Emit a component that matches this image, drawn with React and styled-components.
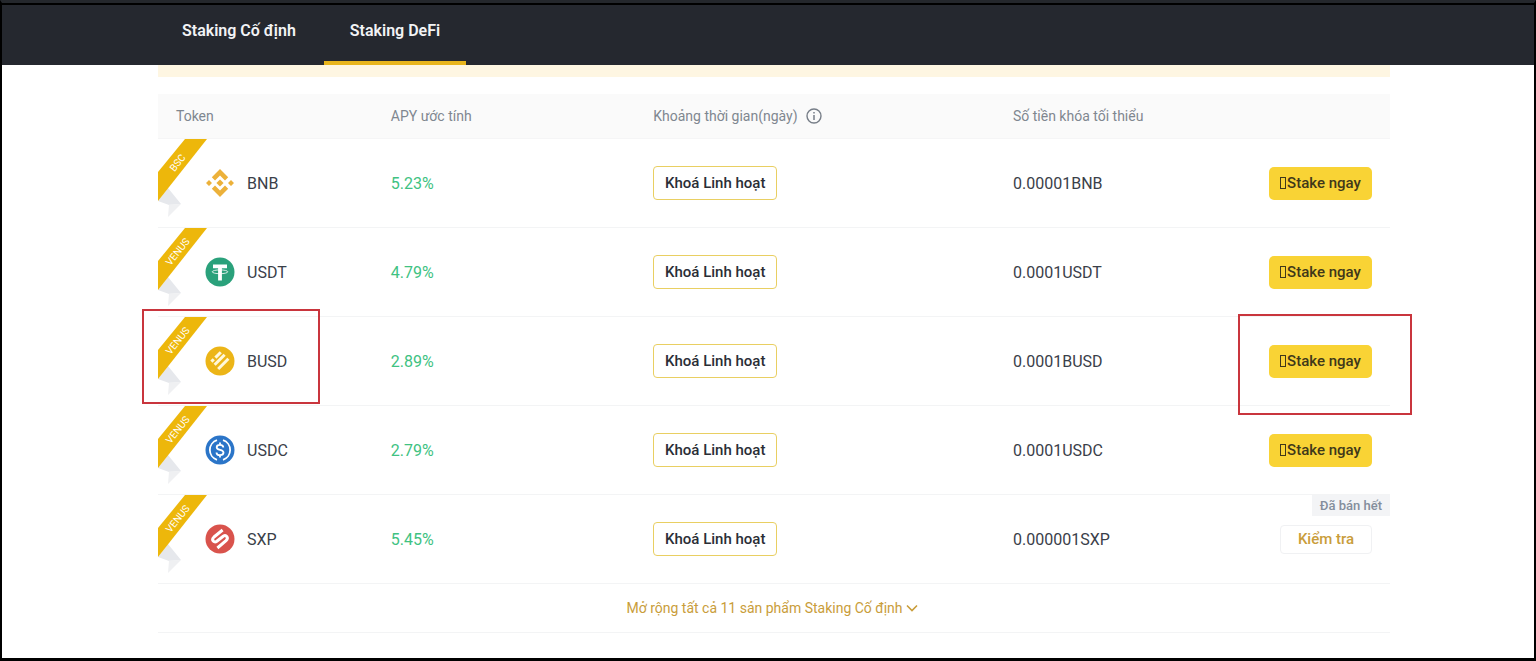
import React from "react";
import styled, { createGlobalStyle } from "styled-components";

const GlobalStyle = createGlobalStyle`
  *, *::before, *::after { box-sizing: border-box; }
  body {
    margin: 0;
    background: #fff;
    font-family: Roboto, "Liberation Sans", sans-serif;
    color: #3a4049;
  }
`;

const Page = styled.div`
  min-height: 100vh;
  display: flex;
  flex-direction: column;
  border: 2px solid #000;
  border-top: 3px solid #24272c;
  border-bottom-width: 3px;
`;

const Header = styled.header`
  background: #25282f;
  border-top: 2px solid #000;
  height: 62px;
  padding-left: 154px;
`;

const Tabs = styled.nav`
  display: flex;
  gap: 2px;
  height: 100%;
`;

const Tab = styled.a`
  display: flex;
  align-items: flex-start;
  padding: 14px 26px 0;
  border-bottom: 4px solid ${(p) => (p.$active ? "#e8b51c" : "transparent")};
  color: #f2f3f5;
  font-size: 16px;
  line-height: 24px;
  font-weight: 600;
  text-decoration: none;
  white-space: nowrap;
`;

const Content = styled.main`
  flex: 1;
  padding: 0 144px 0 156px;
`;

const NoticeEdge = styled.div`
  height: 12px;
  margin-bottom: 17px;
  background: #fef6e2;
`;

const Table = styled.table`
  width: 100%;
  table-layout: fixed;
  border-collapse: separate;
  border-spacing: 0;
`;

const HeadCell = styled.th`
  height: 45px;
  width: ${(p) => p.$width || "auto"};
  padding: 0 0 0 ${(p) => (p.$first ? "18px" : "0")};
  background: #fafafa;
  border-bottom: 1px solid #f5f5f6;
  color: #7f8790;
  font-size: 14px;
  font-weight: 400;
  text-align: left;
  white-space: nowrap;
`;

const HeadLabel = styled.span`
  display: flex;
  align-items: center;
  gap: 8px;
`;

const Cell = styled.td`
  position: relative;
  height: 89px;
  padding: 0;
  border-bottom: 1px solid #f3f4f5;
  font-size: 16px;
  white-space: nowrap;
`;

const Apy = styled.span`
  color: #40c282;
`;

const Token = styled.div`
  display: flex;
  align-items: center;
  gap: 12px;
  padding-left: 47px;
`;

const Ribbon = styled.svg`
  position: absolute;
  top: 0;
  left: 0;
`;

const Actions = styled.div`
  display: flex;
  justify-content: flex-end;
  padding-right: 18px;
`;

const Button = styled.button`
  display: inline-flex;
  align-items: center;
  justify-content: center;
  margin: 0;
  padding: 0;
  font-family: inherit;
  font-size: 15px;
  font-weight: 500;
  border-radius: 4px;
  cursor: pointer;
`;

const TermButton = styled(Button)`
  width: 124px;
  height: 34px;
  background: #fff;
  border: 1px solid #e9cf62;
  color: #2a2e36;
`;

const StakeButton = styled(Button)`
  width: 103px;
  height: 33px;
  gap: 1px;
  background: #f9d335;
  border: 0;
  border-radius: 5px;
  color: #40381a;
`;

const EmptyGlyph = styled.span`
  width: 6px;
  height: 12px;
  border: 1px solid currentColor;
`;

const CheckButton = styled(Button)`
  width: 92px;
  height: 29px;
  background: #fff;
  border: 1px solid #f0f1f3;
  color: #c99d3a;
`;

const SoldOut = styled.span`
  position: absolute;
  top: 0;
  right: 0;
  padding: 0 8px;
  background: #f3f4f6;
  color: #848e9c;
  font-size: 13px;
  font-weight: 500;
  line-height: 21px;
`;

const Highlight = styled.span`
  position: absolute;
  z-index: 1;
  border: 2px solid #c9353d;
  pointer-events: none;
`;

const TokenHighlight = styled(Highlight)`
  top: -8px;
  left: -16px;
  width: 178px;
  height: 95px;
`;

const ActionHighlight = styled(Highlight)`
  top: -3px;
  right: -22px;
  width: 174px;
  height: 101px;
`;

const Expand = styled.div`
  display: flex;
  justify-content: center;
  align-items: center;
  height: 49px;
  padding-right: 4px;
  border-bottom: 1px solid #f3f4f5;
`;

const ExpandLink = styled.a`
  display: flex;
  align-items: center;
  gap: 3px;
  color: #c99d3a;
  font-size: 14px;
  text-decoration: none;
`;

function BnbIcon() {
  return (
    <svg width="30" height="30" viewBox="0 0 30 30" fill="#ecb13a" aria-hidden="true">
      <path d="M15 1 23.2 9.2 20 12.4 15 7.4 10 12.4 6.8 9.2Z" />
      <path d="M15 29 23.2 20.8 20 17.6 15 22.6 10 17.6 6.8 20.8Z" />
      <path d="M1 15 4 12 7 15 4 18ZM23 15 26 12 29 15 26 18Z" />
      <path d="M15 11.4 18.6 15 15 18.6 11.4 15Z" />
    </svg>
  );
}

function UsdtIcon() {
  return (
    <svg width="30" height="30" viewBox="0 0 30 30" aria-hidden="true">
      <circle cx="15" cy="15" r="14.5" fill="#2aa17b" />
      <path d="M8 7.5h14v3.7h-5.1v12.3h-3.8V11.2H8Z" fill="#fff" />
      <ellipse cx="15" cy="14.8" rx="7.8" ry="1.9" fill="none" stroke="#fff" strokeWidth="0.8" />
    </svg>
  );
}

function BusdIcon() {
  return (
    <svg width="30" height="30" viewBox="0 0 30 30" aria-hidden="true">
      <circle cx="15" cy="15" r="14.5" fill="#ecb517" />
      <g stroke="#fff8dc" strokeWidth="3">
        <path d="M10.4 11.6 15.8 6.2" />
        <path d="M6.4 15.6 8.8 13.2" />
        <path d="M9.6 18.8 19.6 8.8" />
        <path d="M13.2 23 23.4 12.8" />
      </g>
    </svg>
  );
}

function UsdcIcon() {
  return (
    <svg width="30" height="30" viewBox="0 0 30 30" fill="none" stroke="#fff" aria-hidden="true">
      <circle cx="15" cy="15" r="14.5" fill="#2b75c8" stroke="none" />
      <path d="M12 5.2a10.3 10.3 0 0 0 0 19.6M18 5.2a10.3 10.3 0 0 1 0 19.6" strokeWidth="1.8" />
      <path
        d="M18.3 12.4c0-1.7-1.3-2.6-3.3-2.6s-3.3.9-3.3 2.4c0 3.7 6.8 1.7 6.8 5.4 0 1.6-1.4 2.6-3.5 2.6s-3.5-1-3.5-2.8M15 7.6v2.2M15 20.2v2.2"
        strokeWidth="1.8"
      />
    </svg>
  );
}

function SxpIcon() {
  return (
    <svg width="30" height="30" viewBox="0 0 30 30" fill="none" aria-hidden="true">
      <circle cx="15" cy="15" r="14.5" fill="#d9534c" />
      <path
        d="M17.6 6 9 13C6 15.8 8.8 19.4 11.8 17.2L18.2 12.2C21.2 10.2 24 13.8 21 16.6L12.4 24"
        stroke="#fff"
        strokeWidth="3"
      />
    </svg>
  );
}

function PlatformRibbon({ label }) {
  return (
    <Ribbon width="50" height="78" viewBox="0 0 50 78" role="img" aria-label={label}>
      <path d="M0 62 10 49 23 65 11 66Z" fill="#e6e8ec" />
      <path d="M11 65.5 23 65 10 78Z" fill="#eff0f2" />
      <path d="M27 0H49L0 62V33Z" fill="#edb70b" />
      <text
        x="20"
        y="27"
        transform="rotate(-51 20 24)"
        textAnchor="middle"
        fontSize="10"
        fill="#fff"
      >
        {label}
      </text>
    </Ribbon>
  );
}

function InfoIcon() {
  return (
    <svg width="16" height="16" viewBox="0 0 16 16" fill="none" stroke="#777e88" aria-hidden="true">
      <circle cx="8" cy="8" r="7" strokeWidth="1.4" />
      <path d="M8 7v5M8 4v1.6" strokeWidth="1.5" />
    </svg>
  );
}

function ChevronIcon() {
  return (
    <svg width="12" height="8" viewBox="0 0 12 8" fill="none" stroke="#c99d3a" aria-hidden="true">
      <path d="M1 1.5 6 6.5 11 1.5" strokeWidth="1.6" />
    </svg>
  );
}

const rows = [
  { token: "BNB", platform: "BSC", apy: "5.23%", min: "0.00001BNB", Icon: BnbIcon },
  { token: "USDT", platform: "VENUS", apy: "4.79%", min: "0.0001USDT", Icon: UsdtIcon },
  { token: "BUSD", platform: "VENUS", apy: "2.89%", min: "0.0001BUSD", Icon: BusdIcon, marked: true },
  { token: "USDC", platform: "VENUS", apy: "2.79%", min: "0.0001USDC", Icon: UsdcIcon },
  { token: "SXP", platform: "VENUS", apy: "5.45%", min: "0.000001SXP", Icon: SxpIcon, soldOut: true },
];

function ProductRow({ token, platform, apy, min, Icon, marked, soldOut }) {
  return (
    <tr>
      <Cell>
        <PlatformRibbon label={platform} />
        <Token>
          <Icon />
          {token}
        </Token>
        {marked && <TokenHighlight />}
      </Cell>
      <Cell>
        <Apy>{apy}</Apy>
      </Cell>
      <Cell>
        <TermButton type="button">Khoá Linh hoạt</TermButton>
      </Cell>
      <Cell>{min}</Cell>
      <Cell>
        {soldOut && <SoldOut>Đã bán hết</SoldOut>}
        <Actions>
          {soldOut ? (
            <CheckButton type="button">Kiểm tra</CheckButton>
          ) : (
            <StakeButton type="button">
              <EmptyGlyph />
              Stake ngay
            </StakeButton>
          )}
        </Actions>
        {marked && <ActionHighlight />}
      </Cell>
    </tr>
  );
}

export default function App() {
  return (
    <>
      <GlobalStyle />
      <Page>
        <Header>
          <Tabs>
            <Tab href="#fixed">Staking Cố định</Tab>
            <Tab href="#defi" $active aria-current="page">
              Staking DeFi
            </Tab>
          </Tabs>
        </Header>
        <Content>
          <NoticeEdge />
          <Table>
            <thead>
              <tr>
                <HeadCell $first $width="18.9%">Token</HeadCell>
                <HeadCell $width="21.3%">APY ước tính</HeadCell>
                <HeadCell $width="29.2%">
                  <HeadLabel>
                    Khoảng thời gian(ngày)
                    <InfoIcon />
                  </HeadLabel>
                </HeadCell>
                <HeadCell $width="17%">Số tiền khóa tối thiểu</HeadCell>
                <HeadCell aria-label="Stake" />
              </tr>
            </thead>
            <tbody>
              {rows.map((row) => (
                <ProductRow key={row.token} {...row} />
              ))}
            </tbody>
          </Table>
          <Expand>
            <ExpandLink href="#all">
              Mở rộng tất cả 11 sản phẩm Staking Cố định
              <ChevronIcon />
            </ExpandLink>
          </Expand>
        </Content>
      </Page>
    </>
  );
}
